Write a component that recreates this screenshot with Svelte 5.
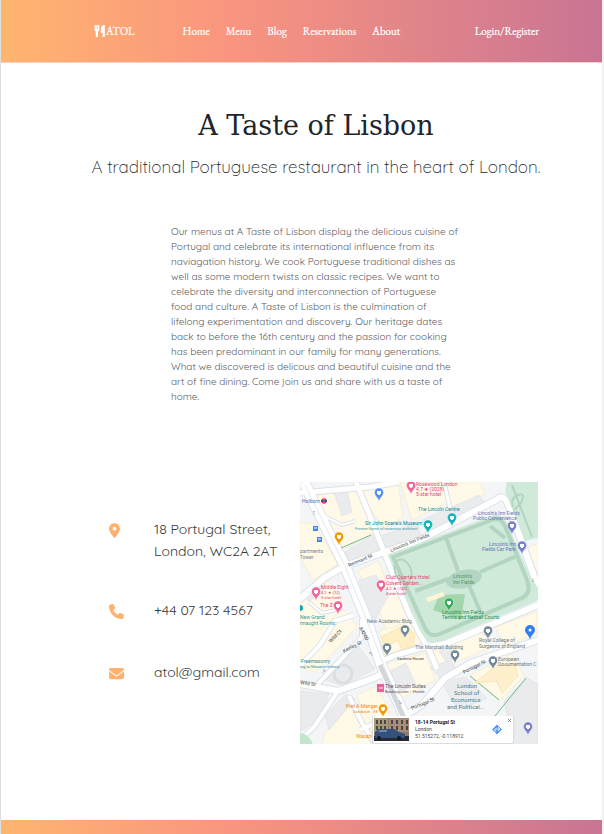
<script>
  const links = ['Home', 'Menu', 'Blog', 'Reservations', 'About'];

  const intro = [
    'Our menus at A Taste of Lisbon display the delicious cuisine of',
    'Portugal and celebrate its international influence from its',
    'naviagation history. We cook Portuguese traditional dishes as',
    'well as some modern twists on classic recipes. We want to',
    'celebrate the diversity and interconnection of Portuguese',
    'food and culture. A Taste of Lisbon is the culmination of',
    'lifelong experimentation and discovery. Our heritage dates',
    'back to before the 16th century and the passion for cooking',
    'has been predominant in our family for many generations.',
    'What we discovered is delicous and beautiful cuisine and the',
    'art of fine dining. Come join us and share with us a taste of',
    'home.'
  ].join('\n');

  const cream = [
    '8,15 55,7 76,49 42,68 27,45', '58,6 98,1 103,35 84,46 73,31', '100,0 140,0 152,18 112,38',
    '144,0 180,0 185,12 152,26', '0,40 14,42 38,82 13,98 0,75', '0,121 28,99 43,121 31,164 0,158',
    '58,89 78,79 89,105 70,115', '75,118 99,109 119,152 92,164', '0,139 20,148 43,127 57,145 15,190 0,184',
    '80,149 113,139 123,159 85,174', '85,182 125,171 135,198 100,217', '128,172 180,147 190,165 139,188',
    '171,193 212,172 224,194 200,218', '57,213 78,204 91,236 67,246', '25,251 51,223 74,240 70,263 22,263',
    '227,66 238,62 238,93', '196,145 237,130 237,151 204,165'
  ];
  const grey = [
    '34,11 47,8 52,30 42,34', '45,70 72,53 80,69 51,82', '79,55 117,40 121,54 86,69',
    '122,38 179,13 188,25 128,55', '59,98 76,93 89,113 75,138 66,132', '4,109 18,99 24,107 9,120',
    '21,196 56,161 75,187 43,204', '25,233 46,212 55,217 29,248', '0,209 29,212 20,236 0,250',
    '88,190 106,181 116,203 99,210', '130,185 151,178 157,190 141,197', '142,200 166,195 187,216 158,229',
    '204,219 227,196 238,202 238,263 214,263', '193,193 206,184 208,198 199,204', '139,169 151,163 158,174 146,180'
  ];
  const roads = [
    ['M0 11 70 5 99 0', 5], ['M4 0 16 25 45 84 66 136 82 185 105 235 115 263', 10],
    ['M45 84 79 72 120 58 196 18Q203 11 208 22L238 105', 6], ['M45 84 24 96 0 117', 6],
    ['M56 0 76 49 84 70 109 132 130 170 137 187', 5], ['M127 165 145 162 238 123', 6],
    ['M18 202 62 155 62 137', 4], ['M0 184 20 163 35 139 54 133', 4],
    ['M80 180 96 173 129 164', 5], ['M0 202 38 209 74 196 86 190', 6],
    ['M38 209 14 245 0 258', 4], ['M49 214 61 239 76 263', 4],
    ['M98 238 122 223 145 196 171 181 238 158', 6], ['M60 248 74 242 99 237', 4],
    ['M18 31 42 43 55 39', 2], ['M9 120 22 131 41 127', 2], ['M144 0 150 26', 3]
  ];
  const pins = [
    [111, 4, '#f0649c'], [79, 11, '#4f8ff5'], [39, 55, '#f29900'], [152, 36, '#12b0bd'], [128, 43, '#12b0bd'],
    [212, 44, '#7880cb'], [222, 64, '#7880cb'], [81, 103, '#f0649c'], [16, 110, '#f0649c'], [38, 124, '#f0649c'],
    [149, 121, '#34a853'], [105, 148, '#728a9a'], [87, 166, '#728a9a'], [188, 149, '#728a9a'],
    [155, 173, '#728a9a'], [193, 179, '#728a9a'], [83, 227, '#f29900'], [228, 245, '#7880cb']
  ];
  const labels = [
    ['Rosewood London', 116, 4, 5, '#e83f78'], ['4.7 ★ (2028)', 116, 9, 5, '#e83f78'], ['5-star hotel', 116, 14, 5, '#e83f78'],
    ['Holborn', 2, 21, 5, '#416fc0'], ['The Lincoln Centre', 118, 29, 5, '#178b99'],
    ["Sir John Soane's Museum", 65, 43, 5, '#008799'], ['Former home of eccentric architect', 55, 48, 4, '#3c95a1'],
    ["Lincoln's Inn Fields", 178, 33, 5, '#6971b8'], ['Public Convenience', 173, 38, 5, '#6971b8'],
    ["Lincoln's Inn", 189, 64, 5, '#6971b8'], ['Fields Car Park', 182, 69, 5, '#6971b8'],
    ['partments', 0, 71, 5, '#7a858e'], ['Tower', 0, 77, 5, '#7a858e'],
    ['Middle Eight', 21, 107, 5, '#e83f78'], ['4.2 ★ (22)', 21, 112, 4, '#e83f78'], ['5-star hotel', 21, 117, 4, '#e83f78'],
    ['The Z', 20, 125, 5, '#e83f78'], ['Club Quarters Hotel', 86, 97, 5, '#e83f78'], ['Covent Garden...', 86, 103, 5, '#e83f78'],
    ['4.2 ★ (740)', 86, 108, 4, '#e83f78'], ['4-star hotel', 86, 113, 4, '#e83f78'],
    ["Lincoln's", 153, 96, 5, '#4c9865'], ['Inn Fields', 153, 102, 5, '#4c9865'],
    ["Lincoln's Inn Fields", 142, 132, 5, '#298b50'], ['Tennis and Netball Courts', 142, 137, 5, '#298b50'],
    ['New Grand', 0, 137, 5, '#349aa2'], ['nnaught Rooms', 0, 143, 5, '#349aa2'],
    ['New Academic Bldg', 67, 141, 5, '#687985'], ['The Marshall Building', 115, 167, 5, '#687985'],
    ['Royal College of', 179, 160, 5, '#687985'], ['Surgeons of England', 179, 166, 5, '#687985'],
    ['European', 198, 179, 5, '#687985'], ['Documentation C', 198, 184, 5, '#687985'],
    ['Sardinia House', 97, 178, 4, '#3b454d'], ['Freemasonry', 1, 181, 5, '#319199'], ['ing to Masonic history', 0, 186, 4, '#319199'],
    ['The Lincoln Suites', 85, 206, 5, '#62505c'], ['Booking.com – Hotels', 85, 211, 4, '#62505c'],
    ['London', 157, 206, 6, '#487e8c'], ['School of', 154, 213, 6, '#487e8c'], ['Economics', 151, 220, 6, '#487e8c'],
    ['and Political...', 147, 227, 6, '#487e8c'], ['Pret A Manger', 46, 226, 5, '#ed8b17'], ['Sandwich · ££', 53, 231, 4, '#ed8b17'],
    ['Wasabi', 56, 256, 5, '#ed8b17']
  ];
  const streets = [
    ['Remnant St', 49, 85, -23], ["Lincoln's Inn Fields", 91, 70, -22], ['A4200', 59, 146, 62],
    ['Wild Ct', 31, 161, -46], ['Keeley St', 44, 171, -28], ['Wild St', 0, 202, 8],
    ['Portugal St', 164, 192, -27], ['Portugal St', 112, 228, -23]
  ];
</script>

<div class="page">
  <header>
    <a class="brand" href="#home">
      <svg width="12" height="12" viewBox="0 0 12 12" aria-hidden="true">
        <path fill="currentColor" d="M.5 0H1.800V4H2.200V0H3.500V4H4V0H5.300V4.800Q5.300 6.200 4 6.600V12H1.800V6.600Q.5 6.200.5 4.800ZM10.800 0V12H8.700V8H6.800V4Q6.800 0 10.800 0Z" />
      </svg>ATOL
    </a>
    <nav>
      {#each links as link}
        <a href={'#' + link.toLowerCase()}>{link}</a>
      {/each}
    </nav>
    <a class="login" href="#login">Login/Register</a>
  </header>

  <main>
    <h1>A Taste of Lisbon</h1>
    <h2>A traditional Portuguese restaurant in the heart of London.</h2>
    <p class="intro">{intro}</p>

    <section class="contact">
      <address>
        <div class="row">
          <svg width="11" height="15" viewBox="0 0 384 512" aria-hidden="true"><path d="M215.700 499.200C267 435 384 279.400 384 192 384 86 298 0 192 0S0 86 0 192c0 87.400 117 243 168.300 307.200 12.300 15.300 35.100 15.300 47.400 0ZM192 128a64 64 0 1 1 0 128 64 64 0 1 1 0-128Z" /></svg>
          <span>18 Portugal Street,<br />London, WC2A 2AT</span>
        </div>
        <div class="row">
          <svg width="15" height="15" viewBox="0 0 512 512" aria-hidden="true"><path d="M164.900 24.600c-7.700-18.600-28-28.500-47.400-23.200l-88 24C12.100 30.200 0 46 0 64c0 247.400 200.600 448 448 448 18 0 33.800-12.100 38.600-29.500l24-88c5.300-19.400-4.600-39.700-23.200-47.400l-96-40c-16.300-6.800-35.200-2.100-46.300 11.600L304.700 368C234.300 334.700 177.300 277.700 144 207.300L193.300 167c13.700-11.200 18.400-30 11.600-46.300Z" /></svg>
          <span>+44 07 123 4567</span>
        </div>
        <div class="row">
          <svg width="15" height="15" viewBox="0 0 512 512" aria-hidden="true"><path d="M48 64C21.500 64 0 85.500 0 112c0 15.100 7.100 29.300 19.200 38.400L236.800 313.600c11.400 8.500 27 8.500 38.400 0L492.800 150.400c12.100-9.100 19.200-23.300 19.200-38.400 0-26.500-21.500-48-48-48ZM0 176v208c0 35.300 28.700 64 64 64h384c35.300 0 64-28.700 64-64V176L294.400 339.200c-22.800 17.100-54 17.100-76.800 0Z" /></svg>
          <span>atol@gmail.com</span>
        </div>
      </address>

      <svg class="map" viewBox="0 0 238 262" role="img" aria-label="Map of Portugal Street, London">
        <rect width="238" height="262" fill="#f3f5f7" />
        {#each cream as points}
          <polygon {points} fill="#fff9e7" stroke="#f9e8bd" stroke-width=".6" />
        {/each}
        {#each grey as points}
          <polygon {points} fill="#e9ebed" stroke="#dee1e5" stroke-width=".6" />
        {/each}
        <circle cx="43" cy="192" r="9" fill="none" stroke="#dcdee1" stroke-width="3" />

        {#each roads as [d, width]}
          <path {d} fill="none" stroke="#dde2e9" stroke-width={width + 2} />
        {/each}
        {#each roads as [d, width]}
          <path {d} fill="none" stroke="#fff" stroke-width={width} />
        {/each}
        <path d="M5 3 45 84 66 136 84 184 107 240" fill="none" stroke="#e3e7ee" />
        <path d="M80 183 104 236" fill="none" stroke="#d3d6da" stroke-width="5" />

        <path d="M88 73 194 33Q201 31 207 41L230 94 238 106V118L146 157Q134 163 127 159L120 149Z" fill="#cfead9" />
        <path d="M207 0H238V56L225 59 205 9Z" fill="#cfead9" />
        <g fill="none" stroke="#b3d4c0" stroke-width="4">
          <path d="M93 75 195 37Q201 36 205 44L227 98Q232 111 222 116L142 151Q130 157 125 146Z" />
          <path d="M145 53 158 89M168 101 180 129M115 109 148 97M180 90 219 73M190 44 205 56" />
          <ellipse cx="103" cy="89" rx="8" ry="12" transform="rotate(-20 103 89)" stroke-width="2" />
          <path d="M212 3 232 55M213 25Q210 16 218 13T221 21L214 28" stroke-width="2" />
        </g>
        <ellipse cx="164" cy="97" rx="18" ry="9" fill="#b3d4c0" transform="rotate(-13 164 97)" />
        <path d="M139 113 165 112 161 138 133 128Z" fill="#a2d6ad" />
        <path d="M126 116 143 110 145 114 128 120Z" fill="#fff5d4" />
        <path d="M0 251Q10 252 13 263H0Z" fill="#c1e6cc" />
        <path d="M41 66 71 53M170 194 199 218M226 196 195 234" fill="none" stroke="#70bd82" />
        <path d="M174 201 196 184 215 181 218 194 202 211 197 199Z" fill="#fff0cd" stroke="#f3d799" stroke-width=".5" />
        <path d="M81 155 105 143 115 152 113 164 102 168 98 158 86 165Z" fill="#ffefc3" stroke="#efd695" stroke-width=".5" />

        <path d="M14 29V33M13 30 14 29 15 30M70 170 72 174M69 172 70 170 72 171M22 191 25 188M23 188H25V190M99 218 101 222M99 221 101 222 102 220M233 96V100M232 99 233 100 234 99" fill="none" stroke="#a3aec0" stroke-width=".7" />
        {#each labels as [text, x, y, size, color]}
          <text {x} {y} font-size={size} fill={color}>{text}</text>
        {/each}
        {#each streets as [text, x, y, angle]}
          <text font-size="5" fill="#343f48" transform={`translate(${x} ${y}) rotate(${angle})`}>{text}</text>
        {/each}
        {#each pins as [x, y, color]}
          <g transform={`translate(${x} ${y})`}>
            <path d="M0 8.500C-1 4-4.500 3-4.500-.5A4.500 4.500 0 0 1 4.500-.5C4.500 3 1 4 0 8.500Z" fill={color} stroke="#fff" stroke-width=".4" />
            <path d="M-2-2H2V1H1V2H-1V1H-2Z" fill="#fff" />
          </g>
        {/each}
        <path d="M230 158C229 152 225 152 225 148A5 5 0 0 1 235 148C235 152 231 152 230 158Z" fill="#2f7df5" />
        <circle cx="230" cy="148" r="1.500" fill="#fff" />
        <circle cx="24" cy="19" r="2" fill="none" stroke="#dc3751" stroke-width="1.500" />
        <path d="M21 19H27" stroke="#253c9d" stroke-width="1.500" />
        <path d="M13 44H18V49H13ZM17 55H22V60H17Z" fill="#3d86ed" />
        <path d="M14 46H17M18 57H21" stroke="#fff" />
        <path d="M77 202H84V210H77Z" fill="#ed5d9a" />
        <path d="M79 206H83" stroke="#fff" />
        <circle cx="0" cy="126" r="3" fill="#12a4af" />

        <rect x="72" y="234" width="142" height="28" rx="2" fill="#d9dce0" />
        <rect x="73" y="234" width="140" height="27" rx="2" fill="#fff" />
        <rect x="74" y="236" width="35" height="23" fill="#8c7c6e" />
        <path d="M74 236H88V250H74Z" fill="#a49b76" />
        <path d="M89 236H109V250H89Z" fill="#a98b79" />
        <path d="M77 238V242M77 244V248M81 238V242M81 244V248M85 238V242M85 244V248M92 238V242M92 244V248M97 238V242M97 244V248M102 238V242M102 244V248M107 238V242M107 244V248" stroke="#4a4746" stroke-width="2" />
        <path d="M74 254H109V259H74Z" fill="#272b31" />
        <path d="M75 250 79 247H94L99 250 105 252V256H75Z" fill="#34517e" />
        <path d="M80 248H87V250H78Z" fill="#75879c" />
        <circle cx="79" cy="256" r="2" fill="#111820" /><circle cx="99" cy="256" r="2" fill="#111820" />
        <g font-size="5" fill="#46494c">
          <text x="115" y="242" font-weight="700" fill="#202124">18-14 Portugal St</text>
          <text x="115" y="249">London</text>
          <text x="115" y="256">51.515272, -0.118912</text>
        </g>
        <path d="M208 237 211 240M211 237 208 240" stroke="#666" stroke-width=".7" />
        <path d="M197 243 201.500 247.500 197 252 192.500 247.500Z" fill="#5a99f7" stroke="#5a99f7" stroke-linejoin="round" />
        <path d="M195 250V247H199M198 245 200 247 198 249" fill="none" stroke="#fff" stroke-width=".8" />
      </svg>
    </section>
  </main>

  <footer></footer>
</div>

<style>
  :global(body) { margin: 0; background: #fff; }
  .page {
    display: flex;
    flex-direction: column;
    min-height: 100vh;
    box-sizing: border-box;
    border-left: 1px solid #dedede;
    border-right: 2px solid #f0f0f0;
    color: #212529;
    font-family: Quicksand, "Open Sans", sans-serif;
    font-weight: 300;
  }
  header, footer { background: linear-gradient(to right, #ffb56e, #f9957f 38%, #c97494); }
  header {
    display: flex;
    align-items: center;
    height: 62px;
    padding: 0 63px 0 93px;
    border-bottom: 1px solid #f6cfcb;
    font-family: "EB Garamond", "Liberation Serif", serif;
    font-size: 11px;
    font-weight: 400;
  }
  header a { color: #fff; text-decoration: none; -webkit-text-stroke: .2px #fff; }
  .brand { display: flex; align-items: center; }
  nav { display: flex; gap: 16px; margin-left: 48px; }
  .login { margin-left: auto; }
  main { flex: 1; padding: 43px 64px 76px 93px; }
  h1 {
    margin: 0;
    text-align: center;
    font: 400 27px/40px "Roboto Slab", "DejaVu Serif", serif;
  }
  h2 {
    margin: 8px -8px 0;
    text-align: center;
    white-space: nowrap;
    font-size: 17px;
    font-weight: 300;
    line-height: 26px;
  }
  .intro {
    margin: 44px 0 0 77px;
    white-space: pre;
    color: #585b5f;
    font-size: 10px;
    font-weight: 400;
    line-height: 15px;
  }
  .contact { display: flex; align-items: flex-start; margin-top: 78px; }
  address {
    flex: 0 0 191px;
    padding: 36px 0 0 15px;
    box-sizing: border-box;
    color: #383c40;
    font-style: normal;
    font-size: 14px;
    font-weight: 400;
    line-height: 22px;
    white-space: nowrap;
  }
  .row { display: grid; grid-template-columns: 45px 1fr; margin-bottom: 40px; }
  .row:first-child { margin-bottom: 37px; }
  .row svg { fill: #ffb26f; margin-top: 5px; }
  .map { flex: 1; min-width: 0; margin-left: 15px; font-family: Roboto, sans-serif; font-weight: 400; }
  footer { height: 14px; }
</style>
